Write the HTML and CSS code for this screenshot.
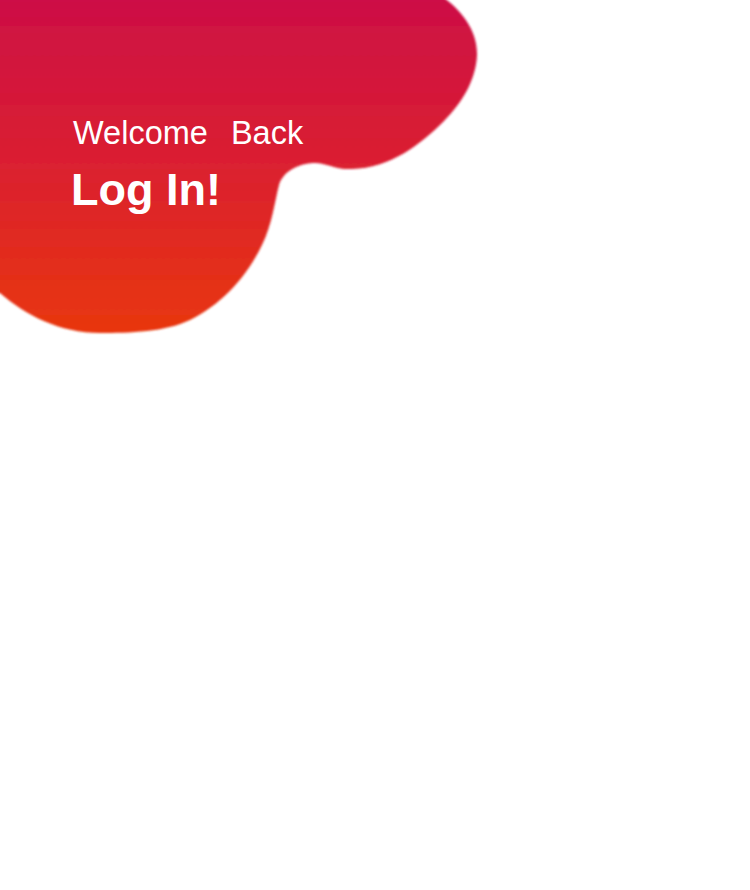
FILE: index.html
```html
<!DOCTYPE html>
<html lang="en">
<head>
<meta charset="utf-8">
<title>Log In</title>
<link rel="stylesheet" href="styles.css">
</head>
<body>
<div class="page">
  <header class="hero">
    <svg class="blob" viewBox="-20 -20 520 380" width="520" height="380" aria-hidden="true">
      <defs>
        <linearGradient id="g" gradientUnits="userSpaceOnUse" x1="0" y1="0" x2="0" y2="333">
          <stop offset="0" stop-color="#cd0f46"/>
          <stop offset="0.5" stop-color="#db2030"/>
          <stop offset="1" stop-color="#e8370e"/>
        </linearGradient>
        <filter id="soft" x="-10%" y="-10%" width="120%" height="120%">
          <feGaussianBlur stdDeviation="1.1"/>
        </filter>
      </defs>
      <path filter="url(#soft)" fill="url(#g)" d="M -20 -20 L 410 -20 C 435 -12 478 15 477 55 C 476 80 462 103 444 121 C 420 145 390 168 352 169 C 335 170 325 162 313 163 C 297 164 283 172 279 185 C 275 200 272 225 262 245 C 245 280 220 305 190 320 C 165 332 130 333 100 333 C 60 333 25 315 0 293 L -20 293 Z"/>
    </svg>
    <div class="titles">
      <p class="welcome">Welcome  Back</p>
      <h1 class="login">Log In!</h1>
    </div>
  </header>
</div>
</body>
</html>
```

FILE: styles.css
```css
html, body {
  margin: 0;
  padding: 0;
  background: #ffffff;
}

body {
  font-family: "Liberation Sans", Arial, sans-serif;
  width: 750px;
  height: 890px;
  overflow: hidden;
}

.page {
  position: relative;
  width: 750px;
  height: 890px;
}

.hero {
  position: relative;
  height: 340px;
}

.blob {
  position: absolute;
  top: -20px;
  left: -20px;
  display: block;
}

.titles {
  position: relative;
  padding: 117px 0 0 73px;
  display: flex;
  flex-direction: column;
  gap: 19px;
  color: #ffffff;
}

.welcome {
  margin: 0;
  font-size: 32.5px;
  line-height: 32px;
  white-space: pre;
  word-spacing: 2.5px;
  font-weight: 400;
}

.login {
  margin: 0 0 0 -2px;
  font-size: 45px;
  line-height: 44px;
  font-weight: 700;
}
```
